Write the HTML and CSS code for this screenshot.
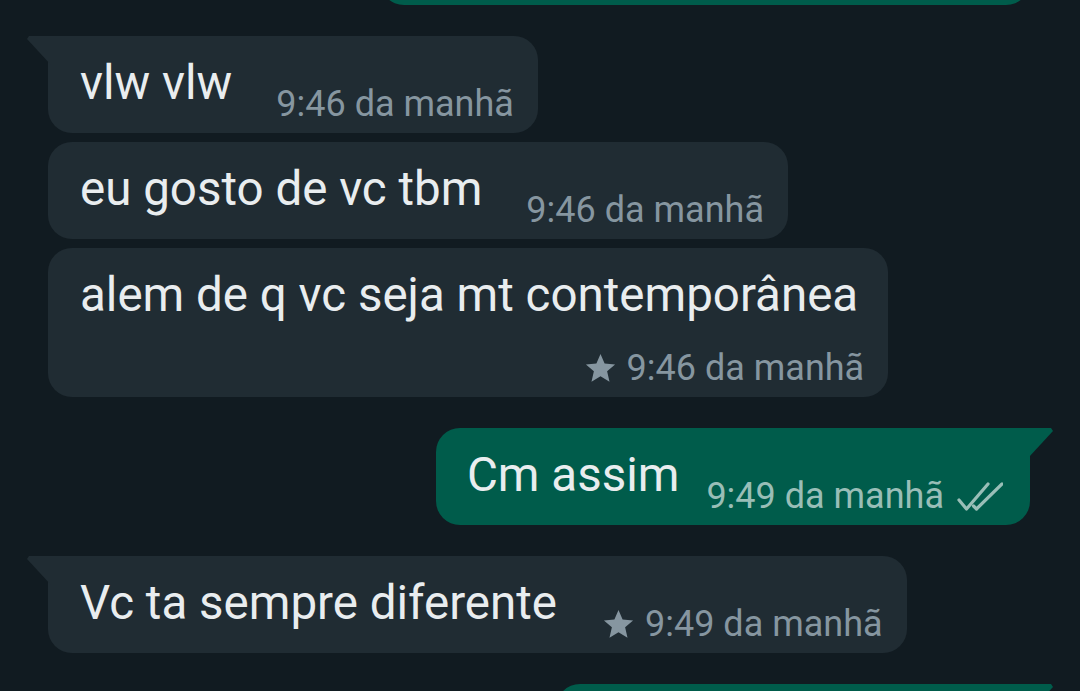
FILE: index.html
```html
<!DOCTYPE html>
<html>
<head>
  <title>Conversa</title>
  <link rel="stylesheet" href="styles.css">
</head>
<body>
  <div class="chat">
    <div class="msg out prev"></div>

    <div class="msg in tail group">
      <span class="text">vlw vlw</span>
      <span class="meta"><span class="time">9:46 da manhã</span></span>
    </div>
    <div class="msg in">
      <span class="text">eu gosto de vc tbm</span>
      <span class="meta"><span class="time">9:46 da manhã</span></span>
    </div>
    <div class="msg in stack">
      <span class="text">alem de q vc seja mt contemporânea</span>
      <span class="meta">
        <svg class="star" viewBox="0 0 24 24"><path d="M12 17.27L18.18 21l-1.64-7.03L22 9.24l-7.19-.61L12 2 9.19 8.63 2 9.24l5.46 4.73L5.82 21z"/></svg>
        <span class="time">9:46 da manhã</span>
      </span>
    </div>

    <div class="msg out tail group">
      <span class="text">Cm assim</span>
      <span class="meta">
        <span class="time">9:49 da manhã</span>
        <svg class="check" viewBox="0 0 46 30"><polyline points="2,18 9.5,27 31,2"/><polyline points="16.5,24 19.5,27 45,2"/></svg>
      </span>
    </div>

    <div class="msg in tail group">
      <span class="text">Vc ta sempre diferente</span>
      <span class="meta">
        <svg class="star" viewBox="0 0 24 24"><path d="M12 17.27L18.18 21l-1.64-7.03L22 9.24l-7.19-.61L12 2 9.19 8.63 2 9.24l5.46 4.73L5.82 21z"/></svg>
        <span class="time">9:49 da manhã</span>
      </span>
    </div>

    <div class="msg out tail group next"></div>
  </div>
</body>
</html>
```

FILE: styles.css
```css
html, body {
  margin: 0;
  height: 691px;
  overflow: hidden;
}

body {
  background-color: #111b21;
  font-family: Roboto, "Noto Sans", sans-serif;
}

.chat {
  display: flex;
  flex-direction: column;
  padding: 0 50px 0 48px;
}

.msg {
  position: relative;
  display: flex;
  align-items: flex-end;
  padding: 20px 24px 8px 32px;
  margin-top: 9px;
  border-radius: 24px;
}

.msg.in {
  align-self: flex-start;
  background-color: #202c33;
}

.msg.out {
  align-self: flex-end;
  background-color: #005c4b;
  padding-left: 31px;
  padding-right: 27px;
}

.msg.group {
  margin-top: 31px;
}

.msg .text {
  font-size: 47.5px;
  line-height: 54px;
  color: #e9edef;
  padding-bottom: 15px;
  white-space: nowrap;
}

.msg .meta {
  display: flex;
  align-items: center;
  margin-left: 44px;
  font-size: 36px;
  line-height: 41px;
  color: #8696a0;
  white-space: nowrap;
}

.msg.out .meta {
  margin-left: 27px;
  color: #99beb7;
}

.msg.stack {
  flex-direction: column;
  align-items: stretch;
  padding-right: 30px;
}

.msg.stack .text {
  padding-bottom: 0;
}

.msg.stack .meta {
  align-self: flex-end;
  margin-left: 0;
  margin-right: -6px;
  margin-top: 26px;
}

.star {
  width: 35px;
  height: 35px;
  margin-right: 9px;
  fill: #8696a0;
}

.check {
  width: 46px;
  height: 30px;
  margin-left: 13px;
  fill: none;
  stroke: #99beb7;
  stroke-width: 3.2;
  stroke-linecap: round;
  stroke-linejoin: round;
}

/* bubble tails */
.msg.tail.in {
  border-top-left-radius: 0;
}

.msg.tail.out {
  border-top-right-radius: 0;
}

.msg.tail::before {
  content: "";
  position: absolute;
  top: 0;
  width: 24px;
  height: 29px;
  background-color: inherit;
}

.msg.tail.in::before {
  left: -21px;
  clip-path: polygon(2px 0, 100% 0, 100% 100%, 0 3px);
}

.msg.tail.out::before {
  right: -23px;
  clip-path: polygon(0 0, calc(100% - 2px) 0, 100% 3px, 0 100%);
}

/* partly visible neighbours */
.msg.prev {
  width: 650px;
  height: 97px;
  box-sizing: border-box;
  margin-top: -92px;
}

.msg.next {
  width: 474px;
  height: 97px;
  box-sizing: border-box;
}
```
